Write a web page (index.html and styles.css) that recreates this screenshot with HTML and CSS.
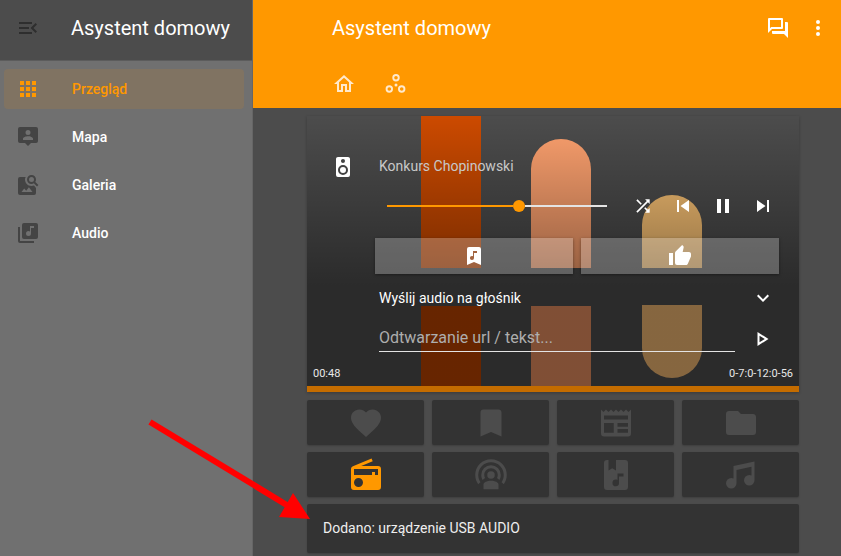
FILE: index.html
```html
<!DOCTYPE html>
<html lang="pl">

<head>
    <meta charset="UTF-8">
    <meta name="viewport" content="width=device-width, initial-scale=1.0">
    <title>Asystent domowy</title>
    <link rel="stylesheet" href="styles.css">
</head>

<body>
    <!-- menu boczne -->
    <aside class="sidebar">
        <div class="sidebar-head">
            <svg class="icon-24 darker" viewBox="0 0 24 24"><path d="M21,15.61L19.59,17L14.58,12L19.59,7L21,8.39L17.44,12L21,15.61M3,6H16V8H3V6M3,13V11H13V13H3M3,18V16H16V18H3Z"/></svg>
            <span class="app-title">Asystent domowy</span>
        </div>
        <nav class="menu">
            <a class="menu-item active">
                <svg class="icon-24" viewBox="0 0 24 24"><path d="M16,20H20V16H16M16,14H20V10H16M10,8H14V4H10M16,8H20V4H16M10,14H14V10H10M4,14H8V10H4M4,20H8V16H4M10,20H14V16H10M4,8H8V4H4V8Z"/></svg>
                Przegląd
            </a>
            <a class="menu-item">
                <svg class="icon-24 dark" viewBox="0 0 24 24"><path fill-rule="evenodd" d="M4,2H20A2,2 0 0 1 22,4V16A2,2 0 0 1 20,18H15L12,21L9,18H4A2,2 0 0 1 2,16V4A2,2 0 0 1 4,2ZM12,5A2.5,2.5 0 0 0 12,10A2.5,2.5 0 0 0 12,5ZM17,15V13.7C17,12.2 14,11.3 12,11.3C10,11.3 7,12.2 7,13.7V15Z"/></svg>
                Mapa
            </a>
            <a class="menu-item">
                <svg class="icon-24 dark" viewBox="0 0 24 24"><path fill-rule="evenodd" d="M15.5,4A2.5,2.5 0 0 0 15.5,9A2.5,2.5 0 0 0 15.5,4ZM19.31,8.91L22.41,12L21,13.41L17.86,10.31C17.08,10.78 16.28,11 15.47,11C14.22,11 13.16,10.58 12.3,9.7C11.45,8.83 11,7.77 11,6.5C11,5.27 11.45,4.2 12.33,3.33C13.2,2.45 14.27,2 15.5,2C16.77,2 17.83,2.45 18.7,3.33C19.58,4.2 20,5.27 20,6.5C20,7.33 19.78,8.14 19.31,8.91Z"/><path fill-rule="evenodd" d="M4,4H9.7C9.2,5 9,5.7 9,6.5C9,10.1 11.9,13 15.5,13C16.4,13 17.2,12.8 18,12.5L20,15V20A2,2 0 0 1 18,22H4A2,2 0 0 1 2,20V6A2,2 0 0 1 4,4ZM16.5,19L12.9,14.3L10.2,17.8L8.2,15.5L5.5,19Z"/></svg>
                Galeria
            </a>
            <a class="menu-item">
                <svg class="icon-24 dark" viewBox="0 0 24 24"><path d="M4,6H2V20A2,2 0 0,0 4,22H18V20H4V6M20,2H8A2,2 0 0,0 6,4V16A2,2 0 0,0 8,18H20A2,2 0 0,0 22,16V4A2,2 0 0,0 20,2M18,7H15V12.5A2.5,2.5 0 0,1 12.5,15A2.5,2.5 0 0,1 10,12.5A2.5,2.5 0 0,1 12.5,10C13.07,10 13.58,10.19 14,10.5V5H18V7Z"/></svg>
                Audio
            </a>
        </nav>
    </aside>

    <div class="main">
        <header class="topbar">
            <div class="topbar-row">
                <span class="app-title">Asystent domowy</span>
                <div class="topbar-actions">
                    <svg class="icon-24 white" viewBox="0 0 24 24"><path d="M15,4V11H5.17L4,12.17V4H15M16,2H3A1,1 0 0,0 2,3V17L6,13H16A1,1 0 0,0 17,12V3A1,1 0 0,0 16,2M21,6H19V15H6V17A1,1 0 0,0 7,18H18L22,22V7A1,1 0 0,0 21,6Z"/></svg>
                    <svg class="icon-24 white" viewBox="0 0 24 24"><path d="M12,16A2,2 0 0,1 14,18A2,2 0 0,1 12,20A2,2 0 0,1 10,18A2,2 0 0,1 12,16M12,10A2,2 0 0,1 14,12A2,2 0 0,1 12,14A2,2 0 0,1 10,12A2,2 0 0,1 12,10M12,4A2,2 0 0,1 14,6A2,2 0 0,1 12,8A2,2 0 0,1 10,6A2,2 0 0,1 12,4Z"/></svg>
                </div>
            </div>
            <div class="tabs">
                <svg class="icon-24 cream" viewBox="0 0 24 24"><path d="M12 5.69L17 10.19V18H15V12H9V18H7V10.19L12 5.69M12 3L2 12H5V20H11V14H13V20H19V12H22"/></svg>
                <svg class="icon-24 cream" viewBox="0 0 24 24"><path fill-rule="evenodd" d="M12,2A3.7,3.7 0 0 0 12,9.4A3.7,3.7 0 0 0 12,2ZM12,3.9A1.8,1.8 0 0 1 12,7.5A1.8,1.8 0 0 1 12,3.9ZM5.3,13.3A3.7,3.7 0 0 0 5.3,20.7A3.7,3.7 0 0 0 5.3,13.3ZM5.3,15.2A1.8,1.8 0 0 1 5.3,18.8A1.8,1.8 0 0 1 5.3,15.2ZM17.7,13.3A3.7,3.7 0 0 0 17.7,20.7A3.7,3.7 0 0 0 17.7,13.3ZM17.7,15.2A1.8,1.8 0 0 1 17.7,18.8A1.8,1.8 0 0 1 17.7,15.2ZM12,11.5A1.5,1.5 0 0 0 12,14.5A1.5,1.5 0 0 0 12,11.5Z"/></svg>
            </div>
        </header>

        <div class="content">
            <!-- odtwarzacz -->
            <section class="player">
                <div class="art art-a"></div>
                <div class="art art-b"></div>
                <div class="art art-c"></div>
                <div class="art art-d"></div>
                <div class="art art-e"></div>
                <div class="art art-f"></div>
                <div class="shade"></div>

                <div class="player-body">
                    <div class="row-title">
                        <svg class="icon-24 white" viewBox="0 0 24 24"><path d="M12,12A3,3 0 0,0 9,15A3,3 0 0,0 12,18A3,3 0 0,0 15,15A3,3 0 0,0 12,12M12,20A5,5 0 0,1 7,15A5,5 0 0,1 12,10A5,5 0 0,1 17,15A5,5 0 0,1 12,20M12,4A2,2 0 0,1 14,6A2,2 0 0,1 12,8C10.89,8 10,7.1 10,6C10,4.89 10.89,4 12,4M17,2H7C5.89,2 5,2.89 5,4V20A2,2 0 0,0 7,22H17A2,2 0 0,0 19,20V4C19,2.89 18.1,2 17,2Z"/></svg>
                        <span class="track">Konkurs Chopinowski</span>
                    </div>
                    <div class="row-controls">
                        <div class="slider">
                            <div class="slider-fill"></div>
                            <div class="slider-knob"></div>
                            <div class="slider-rest"></div>
                        </div>
                        <div class="transport">
                            <svg class="icon-shuffle white" viewBox="0 0 24 24"><path d="M14.83,13.41L13.42,14.82L16.55,17.95L14.5,20H20V14.5L17.96,16.54L14.83,13.41M14.5,4L16.54,6.04L4,18.59L5.41,20L17.96,7.46L20,9.5V4M10.59,9.17L5.41,4L4,5.41L9.17,10.58L10.59,9.17Z"/></svg>
                            <svg class="icon-24 white" viewBox="0 0 24 24"><path d="M6,18V6H8V18H6M9.5,12L18,6V18L9.5,12Z"/></svg>
                            <svg class="icon-24 white" viewBox="0 0 24 24"><path d="M14,19H18V5H14M6,19H10V5H6V19Z"/></svg>
                            <svg class="icon-24 white" viewBox="0 0 24 24"><path d="M16,18H18V6H16M6,18L14.5,12L6,6V18Z"/></svg>
                        </div>
                    </div>
                    <div class="row-buttons">
                        <button class="glass" type="button">
                            <svg class="icon-24 white" viewBox="0 0 24 24"><path fill-rule="evenodd" d="M7,3H17A2,2 0 0 1 19,5V21L12,18L5,21V5A2,2 0 0 1 7,3ZM11,7V12.3C10.6,12.1 10.3,12 9.9,12A2,2 0 0 0 9.9,16A2,2 0 0 0 12,14V9H15V7Z"/></svg>
                        </button>
                        <button class="glass" type="button">
                            <svg class="icon-24 white" viewBox="0 0 24 24"><path d="M23,10C23,8.89 22.1,8 21,8H14.68L15.64,3.43C15.66,3.33 15.67,3.22 15.67,3.11C15.67,2.7 15.5,2.32 15.23,2.05L14.17,1L7.59,7.58C7.22,7.95 7,8.45 7,9V19A2,2 0 0,0 9,21H18C18.83,21 19.54,20.5 19.84,19.78L22.86,12.73C22.95,12.5 23,12.26 23,12V10M1,21H5V9H1V21Z"/></svg>
                        </button>
                    </div>
                    <div class="row-send">
                        <span>Wyślij audio na głośnik</span>
                        <svg class="icon-24 white" viewBox="0 0 24 24"><path d="M7.41,8.58L12,13.17L16.59,8.58L18,10L12,16L6,10L7.41,8.58Z"/></svg>
                    </div>
                    <div class="row-url">
                        <span class="url-field">Odtwarzanie url / tekst...</span>
                        <svg class="icon-play white" viewBox="0 0 24 24"><path d="M8.5,8.64L13.77,12L8.5,15.36V8.64M6.5,5V19L17.5,12"/></svg>
                    </div>
                    <div class="row-time">
                        <span>00:48</span>
                        <span>0-7:0-12:0-56</span>
                    </div>
                </div>
                <div class="progress"></div>
            </section>

            <!-- skroty -->
            <div class="shortcuts">
                <div class="tile"><svg class="icon-36" viewBox="0 0 24 24"><path d="M12,21.35L10.55,20.03C5.4,15.36 2,12.27 2,8.5C2,5.41 4.42,3 7.5,3C9.24,3 10.91,3.81 12,5.08C13.09,3.81 14.76,3 16.5,3C19.58,3 22,5.41 22,8.5C22,12.27 18.6,15.36 13.45,20.03L12,21.35Z"/></svg></div>
                <div class="tile"><svg class="icon-36" viewBox="0 0 24 24"><path d="M17,3H7A2,2 0 0,0 5,5V21L12,18L19,21V5C19,3.89 18.1,3 17,3Z"/></svg></div>
                <div class="tile"><svg class="icon-36" viewBox="0 0 24 24"><path fill-rule="evenodd" d="M20.33,4.67L18.67,3L17,4.67L15.33,3L13.67,4.67L12,3L10.33,4.67L8.67,3L7,4.67L5.33,3L3.67,4.67L2,3V19A2,2 0 0,0 4,21H20A2,2 0 0,0 22,19V3L20.33,4.67ZM4,7H20V9.6H4ZM4,12H10.5V18.5H4ZM13,12H20V14.5H13ZM13,16H20V18.5H13Z"/></svg></div>
                <div class="tile"><svg class="icon-36" viewBox="0 0 24 24"><path d="M10,4H4C2.89,4 2,4.89 2,6V18A2,2 0 0,0 4,20H20A2,2 0 0,0 22,18V8C22,6.89 21.1,6 20,6H12L10,4Z"/></svg></div>
                <div class="tile"><svg class="icon-36 orange" viewBox="0 0 24 24"><path d="M20,6A2,2 0 0,1 22,8V20A2,2 0 0,1 20,22H4A2,2 0 0,1 2,20V8C2,7.15 2.53,6.42 3.28,6.13L15.71,1L16.47,2.83L8.83,6H20M20,8H4V12H16V10H18V12H20V8M7,14A3,3 0 0,0 4,17A3,3 0 0,0 7,20A3,3 0 0,0 10,17A3,3 0 0,0 7,14Z"/></svg></div>
                <div class="tile"><svg class="icon-36" viewBox="0 0 24 24"><path d="M17,18.25V21.5H7V18.25C7,16.87 9.24,15.75 12,15.75C14.76,15.75 17,16.87 17,18.25M12,5.5A6.5,6.5 0 0,1 18.5,12C18.5,13.25 18.15,14.42 17.54,15.41L16,14.04C16.32,13.43 16.5,12.73 16.5,12C16.5,9.5 14.5,7.5 12,7.5C9.5,7.5 7.5,9.5 7.5,12C7.5,12.73 7.68,13.43 8,14.04L6.46,15.41C5.85,14.42 5.5,13.25 5.5,12A6.5,6.5 0 0,1 12,5.5M12,1.5A10.5,10.5 0 0,1 22.5,12C22.5,14.28 21.77,16.39 20.54,18.11L19.04,16.76C19.96,15.4 20.5,13.76 20.5,12A8.5,8.5 0 0,0 12,3.5A8.5,8.5 0 0,0 3.5,12C3.5,13.76 4.04,15.4 4.96,16.76L3.46,18.11C2.23,16.39 1.5,14.28 1.5,12A10.5,10.5 0 0,1 12,1.5M12,9.5A2.5,2.5 0 0,1 14.5,12A2.5,2.5 0 0,1 12,14.5A2.5,2.5 0 0,1 9.5,12A2.5,2.5 0 0,1 12,9.5Z"/></svg></div>
                <div class="tile"><svg class="icon-36" viewBox="0 0 24 24"><path fill-rule="evenodd" d="M6,2H7V9L9.5,7.5L12,9V2H18A2,2 0 0 1 20,4V20A2,2 0 0 1 18,22H6A2,2 0 0 1 4,20V4A2,2 0 0 1 6,2ZM13,11V15.3C12.6,15.1 12.3,15 11.9,15A2,2 0 0 0 11.9,19.5A2.2,2.2 0 0 0 14,17.2V13H17V11Z"/></svg></div>
                <div class="tile"><svg class="icon-36" viewBox="0 0 24 24"><path d="M21,3V15.5A3.5,3.5 0 0,1 17.5,19A3.5,3.5 0 0,1 14,15.5A3.5,3.5 0 0,1 17.5,12C18.04,12 18.55,12.12 19,12.34V6.47L9,8.6V17.5A3.5,3.5 0 0,1 5.5,21A3.5,3.5 0 0,1 2,17.5A3.5,3.5 0 0,1 5.5,14C6.04,14 6.55,14.12 7,14.34V6L21,3Z"/></svg></div>
            </div>

            <div class="toast"><span class="toast-text">Dodano: urządzenie USB AUDIO</span></div>
        </div>
    </div>

    <!-- strzalka na zrzucie -->
    <svg class="arrow" width="841" height="556" viewBox="0 0 841 556">
        <line x1="150" y1="422" x2="295" y2="510" stroke="#f00" stroke-width="6"/>
        <polygon points="310,519 279,517 293,493" fill="#f00"/>
    </svg>
</body>

</html>
```

FILE: styles.css
```css
* {
    margin: 0;
    padding: 0;
    box-sizing: border-box;
}

html,
body {
    height: 100%;
}

body {
    display: flex;
    overflow: hidden;
    font-family: Roboto, 'Liberation Sans', sans-serif;
    color: #fff;
    background: #4c4c4c;
}

svg {
    display: block;
    flex: none;
    fill: currentColor;
}

.icon-24 {
    width: 24px;
    height: 24px;
}

.icon-36 {
    width: 36px;
    height: 36px;
    color: #4c4c4c;
}

.icon-shuffle {
    width: 20px;
    height: 20px;
    margin: 2px;
}

.icon-play {
    width: 24px;
    height: 24px;
    margin-top: 2px;
}

.dark {
    color: #444;
}

.darker {
    color: #2e2e2e;
}

.white {
    color: #fff;
}

.cream {
    color: #ffe9cc;
}

.icon-36.orange {
    color: #ff9800;
}

.app-title {
    font-size: 20px;
    color: #fff;
}

/* sidebar */
.sidebar {
    width: 253px;
    flex: none;
    background: #707070;
    border-right: 1px solid #666;
}

.sidebar-head {
    height: 61px;
    display: flex;
    align-items: center;
    gap: 31px;
    padding: 0 0 4px 16px;
    background: #4c4c4c;
    border-bottom: 1px solid #5c5c5c;
}

.menu {
    display: flex;
    flex-direction: column;
    gap: 8px;
    padding: 8px 8px 0 4px;
}

.menu-item {
    height: 40px;
    display: flex;
    align-items: center;
    gap: 32px;
    padding-left: 12px;
    border-radius: 4px;
    font-size: 14px;
    font-weight: 500;
    color: #fff;
}

.menu-item.active {
    background: #807362;
    color: #ff9800;
}

/* top bar */
.main {
    flex: 1;
    min-width: 0;
}

.topbar {
    height: 108px;
    background: #ff9800;
}

.topbar-row {
    height: 60px;
    display: flex;
    align-items: center;
    justify-content: space-between;
    padding: 0 11px 4px 79px;
}

.topbar-actions {
    display: flex;
    gap: 16px;
}

.tabs {
    display: flex;
    gap: 28px;
    padding: 12px 0 0 79px;
}

/* player */
.content {
    padding: 8px 42px 0 54px;
}

.player {
    position: relative;
    height: 276px;
    overflow: hidden;
    background: #4c4c4c;
    box-shadow: 0 1px 3px rgba(0, 0, 0, 0.25);
}

.art {
    position: absolute;
    width: 60px;
}

.art-a {
    left: 114px;
    top: 0;
    height: 152px;
    background: #cc4a00;
}

.art-b {
    left: 224px;
    top: 23px;
    height: 129px;
    background: #ffa26f;
    border-radius: 30px 30px 0 0;
}

.art-c {
    left: 335px;
    top: 79px;
    height: 73px;
    background: #fac274;
    border-radius: 30px 30px 0 0;
}

.art-d {
    left: 114px;
    top: 190px;
    height: 80px;
    background: #b84200;
}

.art-e {
    left: 224px;
    top: 190px;
    height: 80px;
    background: #e48c5f;
}

.art-f {
    left: 335px;
    top: 189px;
    height: 73px;
    background: #efb671;
    border-radius: 0 0 30px 30px;
}

.shade {
    position: absolute;
    inset: 0;
    background: linear-gradient(rgba(0, 0, 0, 0), rgba(0, 0, 0, 0.44) 62%);
}

.player-body {
    position: relative;
    height: 270px;
    padding-top: 34px;
}

.row-title {
    height: 34px;
    display: flex;
    align-items: center;
    gap: 24px;
    padding-left: 24px;
}

.track {
    padding-bottom: 2px;
    font-size: 14px;
    color: #c8c8c8;
}

.row-controls {
    height: 40px;
    margin-top: 2px;
    display: flex;
    align-items: center;
    padding-left: 80px;
}

.slider {
    width: 220px;
    display: flex;
    align-items: center;
}

.slider-fill {
    width: 126px;
    height: 2px;
    background: #ff9800;
}

.slider-knob {
    width: 12px;
    height: 12px;
    border-radius: 50%;
    background: #ff9800;
}

.slider-rest {
    flex: 1;
    height: 2px;
    background: #e4e4e4;
}

.transport {
    display: flex;
    gap: 16px;
    margin-left: 24px;
}

.row-buttons {
    display: flex;
    gap: 8px;
    height: 36px;
    margin: 12px 20px 0 68px;
}

.glass {
    flex: 1;
    display: flex;
    align-items: center;
    justify-content: center;
    border: none;
    background: rgba(255, 255, 255, 0.25);
    box-shadow: 0 1px 3px rgba(0, 0, 0, 0.4);
}

.row-send {
    height: 28px;
    margin: 10px 24px 0 72px;
    display: flex;
    align-items: center;
    justify-content: space-between;
    font-size: 14px;
}

.row-url {
    height: 28px;
    margin: 12px 24px 0 72px;
    display: flex;
    align-items: center;
    gap: 16px;
}

.url-field {
    flex: 1;
    height: 28px;
    line-height: 28px;
    font-size: 16px;
    color: #aeaeae;
    border-bottom: 1px solid #e4e4e4;
}

.row-time {
    height: 18px;
    margin-top: 12px;
    padding: 0 6px;
    display: flex;
    align-items: center;
    justify-content: space-between;
    font-size: 11px;
    color: #e8e8e8;
}

.progress {
    position: relative;
    height: 6px;
    background: #c46c00;
}

/* shortcuts */
.shortcuts {
    display: grid;
    grid-template-columns: repeat(4, 1fr);
    gap: 7px 8px;
    margin-top: 8px;
}

.tile {
    height: 45px;
    display: flex;
    align-items: center;
    justify-content: center;
    background: #333;
    border-radius: 2px;
    box-shadow: 0 1px 2px rgba(0, 0, 0, 0.2);
}

.toast {
    height: 49px;
    margin-top: 7px;
    padding-left: 16px;
    display: flex;
    align-items: center;
    background: #333;
    border-radius: 2px;
    font-size: 14px;
    color: #eee;
    box-shadow: 0 1px 2px rgba(0, 0, 0, 0.2);
}

.toast-text {
    padding-bottom: 2px;
}

.arrow {
    position: absolute;
    left: 0;
    top: 0;
    pointer-events: none;
}
```
